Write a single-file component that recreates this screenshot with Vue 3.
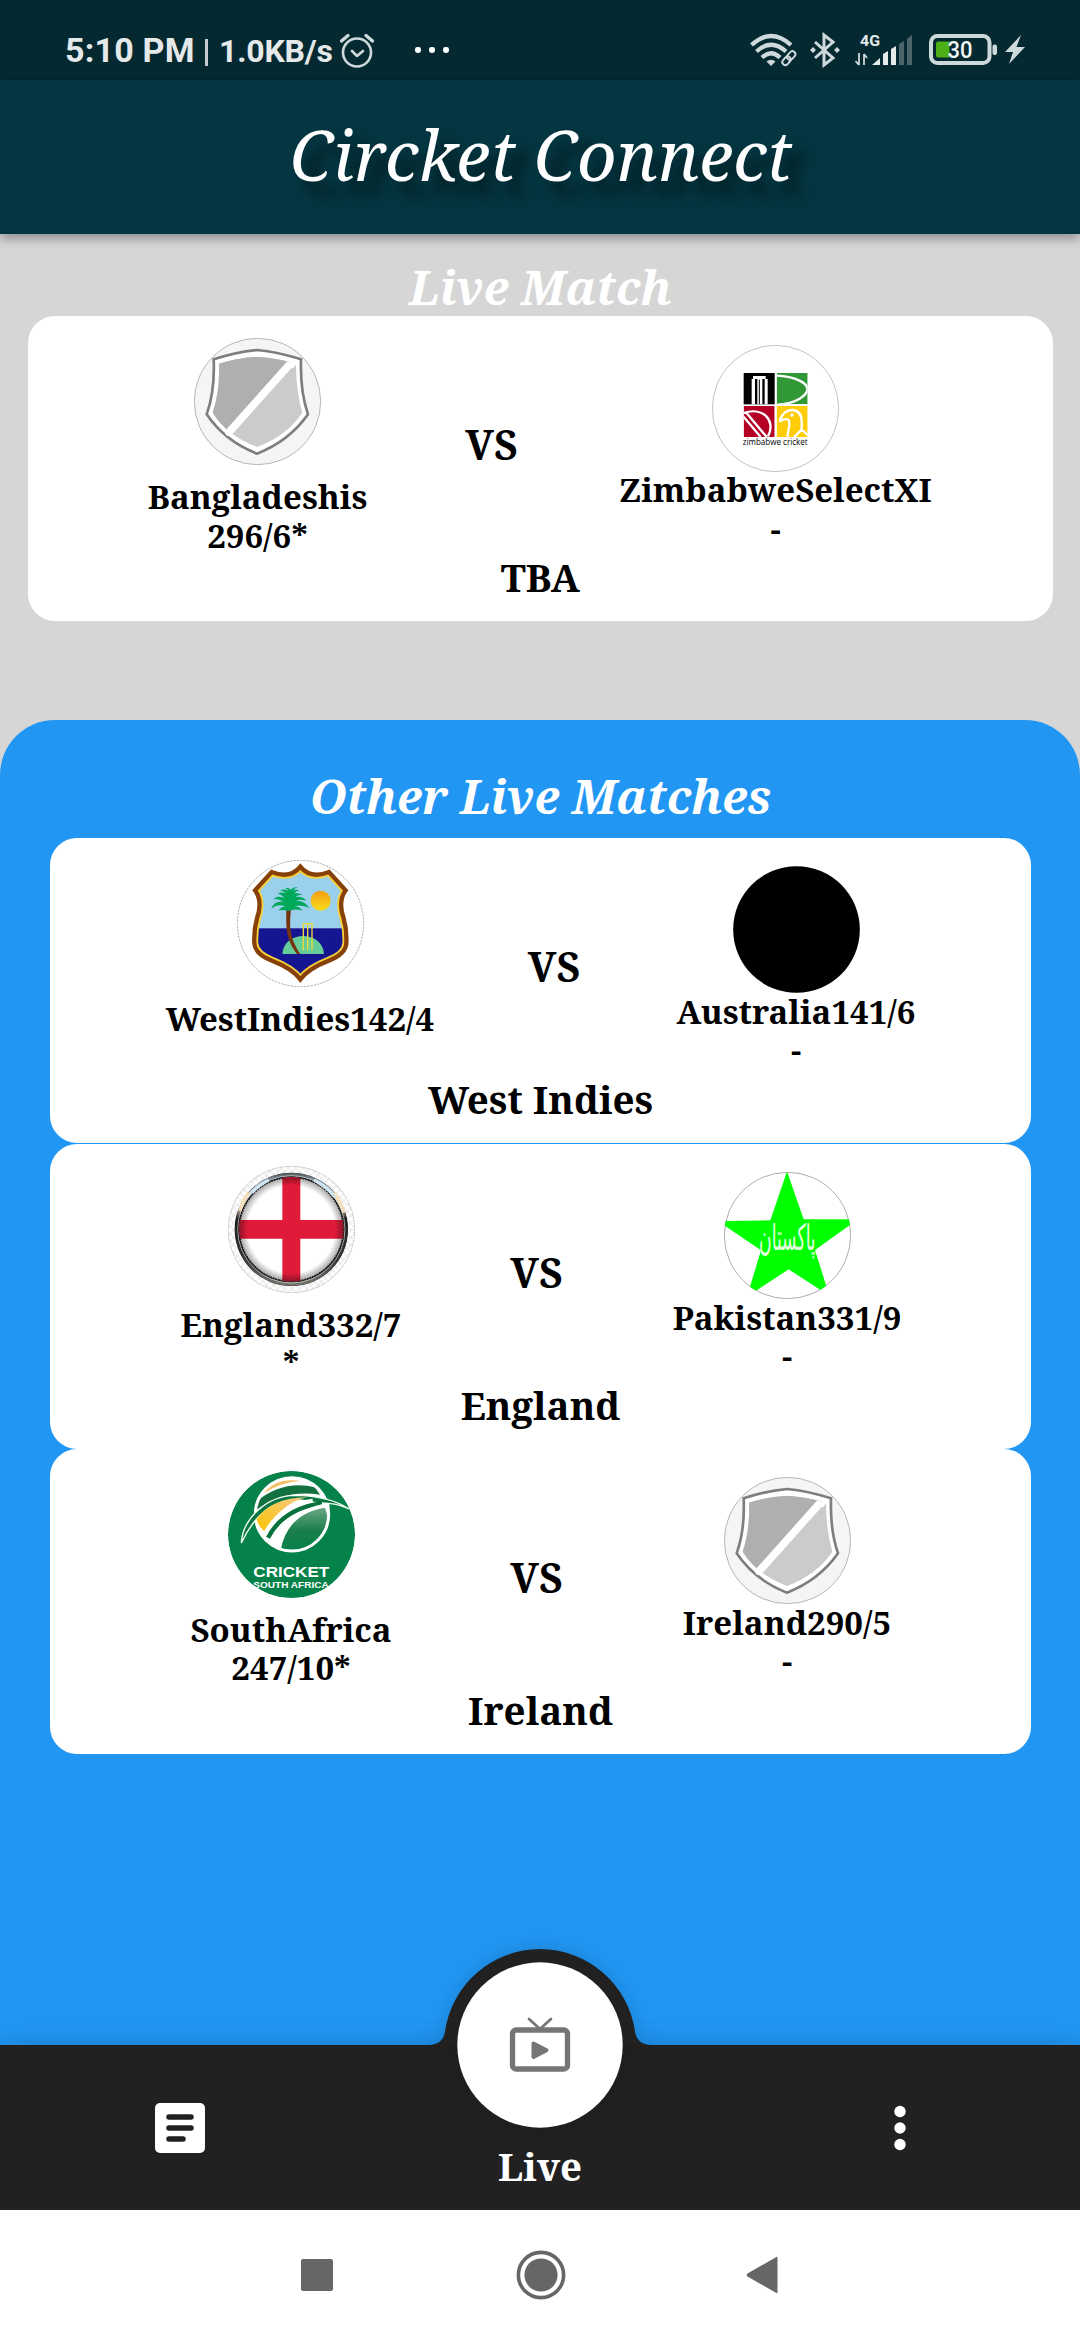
<script setup>
// Column centres are measured from the card's left edge
const SIDE = 360
const MIDDLE = 100

const columns = ([home, vs, away]) => {
  const left = home - SIDE / 2
  const gapA = vs - MIDDLE / 2 - (left + SIDE)
  const gapB = away - SIDE / 2 - (vs + MIDDLE / 2)
  return { gridTemplateColumns: `${left}px ${SIDE}px ${gapA}px ${MIDDLE}px ${gapB}px ${SIDE}px` }
}

const sections = [
  {
    kind: 'featured',
    title: 'Live Match',
    matches: [
      {
        home: { logo: 'shield', name: 'Bangladeshis', score: '296/6*' },
        away: { logo: 'zimbabwe', name: 'ZimbabweSelectXI', score: '-' },
        venue: 'TBA',
        centres: [230, 464, 748],
      },
    ],
  },
  {
    kind: 'others',
    title: 'Other Live Matches',
    matches: [
      {
        home: { logo: 'westindies', name: 'WestIndies142/4', score: '' },
        away: { logo: 'blank', name: 'Australia141/6', score: '-' },
        venue: 'West Indies',
        centres: [250, 504, 746],
      },
      {
        home: { logo: 'england', name: 'England332/7', score: '*' },
        away: { logo: 'pakistan', name: 'Pakistan331/9', score: '-' },
        venue: 'England',
        centres: [241, 486.5, 737],
      },
      {
        home: { logo: 'southafrica', name: 'SouthAfrica', score: '247/10*' },
        away: { logo: 'shield', name: 'Ireland290/5', score: '-' },
        venue: 'Ireland',
        centres: [241, 486.5, 737],
      },
    ],
  },
]
</script>

<template>
  <div class="screen">
    <svg class="sprites" width="0" height="0" aria-hidden="true">
      <defs>
        <clipPath id="round"><circle cx="190.5" cy="190.5" r="190.5" /></clipPath>
        <clipPath id="crest">
          <path d="M300 110Q330 148 386 126L436 181Q412 215 430 265Q440 300 438 340Q436 372 385 392Q325 415 300 448Q275 415 215 392Q164 372 162 340Q160 300 170 265Q188 215 164 181L214 126Q270 148 300 110Z" />
        </clipPath>
        <clipPath id="shield-in">
          <path d="M189 56Q252 60 306 77Q306 160 325 224Q280 292 189 327Q98 292 56 224Q78 160 75 77Q126 60 189 56Z" />
        </clipPath>
        <clipPath id="ball"><circle cx="276" cy="222" r="110" /></clipPath>
        <clipPath id="zred"><rect x="95" y="183" width="93" height="93" /></clipPath>
        <clipPath id="zgreen"><rect x="194" y="84" width="93" height="94" /></clipPath>
        <clipPath id="zgold"><rect x="194" y="183" width="93" height="93" /></clipPath>
        <linearGradient id="sun" x1="0" y1="0" x2="0" y2="1">
          <stop offset="0" stop-color="#f39c12" /><stop offset="1" stop-color="#f8dc1c" />
        </linearGradient>
        <linearGradient id="gold" x1="0" y1="1" x2="1" y2="0">
          <stop offset="0" stop-color="#fdc400" /><stop offset="1" stop-color="#f5c98a" />
        </linearGradient>
        <linearGradient id="chrome" x1="0" y1="0" x2="0" y2="1">
          <stop offset="0" stop-color="#5c6468" /><stop offset=".12" stop-color="#c5dbe6" />
          <stop offset=".3" stop-color="#e8dcc6" /><stop offset=".4" stop-color="#1c1c1c" />
          <stop offset=".8" stop-color="#3a3a3a" /><stop offset="1" stop-color="#77756e" />
        </linearGradient>
        <linearGradient id="glow" x1="0" y1="0" x2="0" y2="1">
          <stop offset="0" stop-color="#6aa883" /><stop offset=".55" stop-color="#1a7d4b" /><stop offset="1" stop-color="#058249" />
        </linearGradient>
        <radialGradient id="dish">
          <stop offset=".84" stop-color="#000" stop-opacity="0" /><stop offset="1" stop-color="#000" stop-opacity=".35" />
        </radialGradient>
        <pattern id="checks" width="22" height="22" patternUnits="userSpaceOnUse">
          <rect width="22" height="22" fill="#fff" /><path d="M0 0h11v11H0zM11 11h11v11H11z" fill="#eee" />
        </pattern>

        <symbol id="logo-shield" viewBox="0 0 381 381">
          <circle cx="190.5" cy="190.5" r="189.5" fill="#f5f5f5" stroke="#a8a8a8" stroke-width="2.500" />
          <path d="M189 36Q252 42 321 64Q318 160 342 229Q285 310 189 347Q93 310 38 229Q63 160 59 64Q126 42 189 36Z" fill="#fff" stroke="#7e7e7e" stroke-width="8" />
          <g clip-path="url(#shield-in)">
            <path d="M0 0H381V381H0Z" fill="#cbcbcb" />
            <path d="M0 0H357L17 381H0Z" fill="#afafaf" />
            <path d="M320 42L80 311" stroke="#fff" stroke-width="23" />
          </g>
          <path d="M310 66L292 88M96 290L114 276" stroke="#fff" stroke-width="12" />
        </symbol>

        <symbol id="logo-zimbabwe" viewBox="0 0 381 381">
          <circle cx="190.5" cy="190.5" r="189.5" fill="#fff" stroke="#b4b4b4" stroke-width="2.500" />
          <path d="M95 84h93v94H95z" fill="#000" />
          <path d="M123 93h38v9h6v76h-9v-76h-7v76h-15v-76h-7v76h-10v-76h4z" fill="#fff" />
          <path d="M142 104v74" stroke="#000" stroke-width="3" />
          <g clip-path="url(#zgreen)">
            <path d="M194 84h93v94h-93z" fill="#319838" />
            <path d="M190 92C255 94 286 116 286 132S260 176 190 180" fill="none" stroke="#fff" stroke-width="7" />
          </g>
          <g clip-path="url(#zred)">
            <path d="M95 183h93v93H95z" fill="#b30024" />
            <path d="M93 205C150 183 194 225 168 274M92 212L146 276M103 203L164 276" fill="none" stroke="#fff" stroke-width="7" />
          </g>
          <g clip-path="url(#zgold)">
            <path d="M194 183h93v93h-93z" fill="#ffcd08" />
            <path d="M203 230C207 207 224 194 242 195Q270 198 269 233V254L288 271M269 254L246 277M203 230C212 221 228 219 231 228C235 245 227 258 226 278" fill="none" stroke="#fff" stroke-width="7" stroke-linejoin="round" />
            <circle cx="240" cy="210" r="5" fill="#fff" />
          </g>
          <text x="92" y="299" font-family="'Open Sans', 'Noto Sans', sans-serif" font-size="25" textLength="195" lengthAdjust="spacingAndGlyphs">zimbabwe cricket</text>
        </symbol>

        <symbol id="logo-westindies" viewBox="0 0 381 381">
          <circle cx="190.5" cy="190.5" r="189.5" fill="#fff" stroke="#9a9a9a" stroke-width="2.500" stroke-dasharray="7 3" />
          <g transform="translate(-110 -90)">
            <g clip-path="url(#crest)">
              <path d="M150 100h300v195H150z" fill="#9bd0ec" />
              <path d="M150 295h300v165H150z" fill="#151592" />
              <circle cx="361" cy="212" r="30" fill="url(#sun)" />
              <path d="M246 372C250 300 367 300 371 372Z" fill="#66cc99" />
              <path d="M258 238H272C268 280 264 320 300 372H290C253 325 258 280 258 238Z" fill="#75340f" />
              <path d="M264 243Q244 238 234 242Q244 229 257 229Q230 220 213 236Q222 211 250 215Q229 203 219 209Q228 195 251 203Q242 191 232 192Q242 184 257 191Q250 182 239 181Q253 175 265 183Q259 175 254 174Q265 172 271 179Q279 170 292 171Q281 176 279 182Q289 177 298 181Q286 183 283 190Q297 188 306 194Q290 195 284 201Q307 198 319 212Q301 206 287 212Q312 211 327 234Q304 222 283 229Q298 230 306 242Q285 234 264 243Z" fill="#00a85a" />
              <path d="M309 361V281M322 361V281M335 361V281M307 281h31" fill="none" stroke="#eedb3a" stroke-width="4" />
              <path d="M300 110Q330 148 386 126L436 181Q412 215 430 265Q440 300 438 340Q436 372 385 392Q325 415 300 448Q275 415 215 392Q164 372 162 340Q160 300 170 265Q188 215 164 181L214 126Q270 148 300 110Z" fill="none" stroke="#f6cf3a" stroke-width="24" />
            </g>
            <path d="M300 110Q330 148 386 126L436 181Q412 215 430 265Q440 300 438 340Q436 372 385 392Q325 415 300 448Q275 415 215 392Q164 372 162 340Q160 300 170 265Q188 215 164 181L214 126Q270 148 300 110Z" fill="none" stroke="#874008" stroke-width="13" />
          </g>
        </symbol>

        <symbol id="logo-blank" viewBox="0 0 381 381"><circle cx="190.5" cy="190.5" r="190" fill="#000" /></symbol>

        <symbol id="logo-england" viewBox="0 0 381 381">
          <circle cx="190.5" cy="190.5" r="189.5" fill="url(#checks)" stroke="#a8a8a8" stroke-width="2.500" stroke-dasharray="5 3" />
          <circle cx="190" cy="190" r="170" fill="#1f1f1f" />
          <circle cx="190" cy="190" r="164" fill="none" stroke="url(#chrome)" stroke-width="10" />
          <circle cx="190" cy="190" r="161" fill="none" stroke="#ddd" stroke-width="2" />
          <circle cx="190" cy="190" r="156" fill="#fff" stroke="#111" stroke-width="4" stroke-dasharray="5 3" />
          <path d="M163 36Q190 30 217 36V162H344Q348 190 344 218H217V344Q190 348 163 344V218H36Q32 190 36 162H163Z" fill="#e01b39" />
          <circle cx="190" cy="190" r="156" fill="url(#dish)" />
          <path d="M62 80Q42 104 36 134" fill="none" stroke="#f4dfb8" stroke-width="10" />
          <path d="M318 80Q340 108 348 140" fill="none" stroke="#f4dfb8" stroke-width="10" />
          <path d="M258 42Q296 62 320 92M122 42Q88 60 72 80" fill="none" stroke="#cfe5f1" stroke-width="10" />
        </symbol>

        <symbol id="logo-pakistan" viewBox="0 0 381 381">
          <circle cx="190.5" cy="190.5" r="189.5" fill="#fff" stroke="#9e9e9e" stroke-width="2.500" />
          <g clip-path="url(#round)">
            <path transform="translate(-221 -68)" d="M410 66L460 210L622 210L494 302L537 439L415 360L290 442L332 303L202 215L360 213Z" fill="#00ff00" />
            <text x="190" y="234" text-anchor="middle" fill="#e6ffe0" font-family="'DejaVu Sans', sans-serif" font-size="108" textLength="170" lengthAdjust="spacingAndGlyphs">پاکستان</text>
          </g>
        </symbol>

        <symbol id="logo-southafrica" viewBox="0 0 381 381">
          <g clip-path="url(#round)">
            <circle cx="190.5" cy="190.5" r="190.5" fill="#058249" />
            <g transform="translate(-84 -92)">
              <g clip-path="url(#ball)">
                <circle cx="276" cy="222" r="110" fill="#fff" />
                <path d="M190 160Q225 112 300 121Q240 126 190 160Z" fill="#f6bd62" />
                <path d="M150 200Q240 115 345 141L360 163Q240 145 150 225Z" fill="#12713f" />
                <path d="M242 330Q262 220 375 202L395 270L340 330Z" fill="url(#glow)" />
              </g>
              <circle cx="276" cy="222" r="110" fill="none" stroke="#fff" stroke-width="9" />
              <path d="M124 308C128 235 200 166 285 165Q390 167 447 206Q405 185 350 188Q200 145 124 308Z" fill="#0a7743" stroke="#f3fff3" stroke-width="4" />
              <path d="M170 236Q215 173 320 171Q240 190 196 276Q174 258 170 236Z" fill="url(#gold)" />
              <path d="M204 292Q250 204 366 189" fill="none" stroke="#08713e" stroke-width="13" />
              <path d="M194 280Q240 192 338 180M228 314Q265 210 388 193" fill="none" stroke="#fff" stroke-width="10" />
              <text x="160" y="411" fill="#fff" font-family="'Liberation Sans', sans-serif" font-weight="700" font-size="43" textLength="228" lengthAdjust="spacingAndGlyphs">CRICKET</text>
              <text x="160" y="443" fill="#fff" font-family="'Liberation Sans', sans-serif" font-weight="700" font-size="26" textLength="226" lengthAdjust="spacingAndGlyphs">SOUTH AFRICA</text>
            </g>
          </g>
        </symbol>
      </defs>
    </svg>

    <div class="status">
      <span class="clock">5:10 PM</span>
      <span class="bar"></span>
      <span class="speed">1.0KB/s</span>
      <svg class="alarm" width="36" height="36" viewBox="0 0 36 36" fill="none" stroke="#ced9db" stroke-width="2.6" stroke-linecap="round" stroke-linejoin="round">
        <circle cx="18" cy="20.5" r="14" /><path d="M13 19l5 5 6-5" /><path d="M2.5 9L9 3.5M33.500 9L27 3.500" stroke-width="3.4" />
      </svg>
      <svg class="more" width="36" height="8" viewBox="0 0 36 8" fill="#fff">
        <rect x="1" y="1" width="6" height="6" rx="2.400" /><rect x="15" y="1" width="6" height="6" rx="2.400" /><rect x="29" y="1" width="6" height="6" rx="2.400" />
      </svg>
      <svg class="wifi" width="48" height="36" viewBox="0 0 48 36" fill="none" stroke="#ced9db" stroke-width="4.200">
        <path d="M1.500 13Q21 -5 41 13M6.500 19.500Q21 6 36 19.500M12 25.500Q21 17 30 25.500" />
        <path d="M21 34L16.500 29.500Q21 26 25.500 29.500Z" fill="#ced9db" stroke="none" />
        <g stroke-width="1.900" transform="rotate(-48 39 26)"><rect x="30.500" y="23" width="9.500" height="6" rx="3" /><rect x="37.500" y="23" width="9.500" height="6" rx="3" /></g>
      </svg>
      <svg class="bluetooth" width="30" height="36" viewBox="0 0 30 36" fill="none" stroke="#ced9db" stroke-width="3">
        <path d="M5 10L23 26L14 33V3L23 10L5 26" /><path d="M3 15l3 3-3 3-3-3zM27 15l3 3-3 3-3-3z" fill="#ced9db" stroke="none" />
      </svg>
      <svg class="signal" width="58" height="36" viewBox="0 0 58 36" fill="#e5eaeb">
        <text x="5" y="14" font-family="Roboto, sans-serif" font-weight="700" font-size="15.500" textLength="20" lengthAdjust="spacingAndGlyphs">4G</text>
        <path d="M4 21v12M9 33V22M4 33l-3.500-4M9 22l3 4" fill="none" stroke="#ced9db" stroke-width="1.800" />
        <path d="M17 33l8-7v7zM28 33V22l5-3v14zM36 33V17l5-3v19z" />
        <path d="M44 33V12l5-3v24zM52 33V7l5-4v30z" fill="#4d666c" />
      </svg>
      <svg class="battery" width="70" height="32" viewBox="0 0 70 32">
        <rect x="2" y="2" width="58.500" height="27" rx="6.500" fill="none" stroke="#ced9db" stroke-width="4" />
        <path d="M9 7.500h11.500v16H9a2 2 0 0 1-2-2v-12a2 2 0 0 1 2-2z" fill="#4caf16" />
        <rect x="63.500" y="10.500" width="4.500" height="10.500" rx="2" fill="#ced9db" />
        <text x="18.500" y="24" fill="#f3f6f6" font-family="Roboto, sans-serif" font-weight="500" font-size="23" textLength="25" lengthAdjust="spacingAndGlyphs">30</text>
      </svg>
      <svg class="bolt" width="20" height="30" viewBox="0 0 20 30" fill="#ced9db"><path d="M16 0L0 17H8L4 29L20 12H11.500Z" /></svg>
    </div>

    <header class="header"><h1>Circket Connect</h1></header>

    <main class="content">
      <section v-for="s in sections" :key="s.kind" :class="s.kind">
        <h2>{{ s.title }}</h2>
        <article v-for="m in s.matches" :key="m.venue" class="card">
          <div class="teams" :style="columns(m.centres)">
            <div class="team home">
              <svg class="logo" width="127" height="127"><use :href="'#logo-' + m.home.logo" /></svg>
              <span>{{ m.home.name }}</span><span>{{ m.home.score }}</span>
            </div>
            <div class="vs">VS</div>
            <div class="team away">
              <svg class="logo" width="127" height="127"><use :href="'#logo-' + m.away.logo" /></svg>
              <span>{{ m.away.name }}</span><span>{{ m.away.score }}</span>
            </div>
          </div>
          <div class="venue">{{ m.venue }}</div>
        </article>
      </section>
    </main>

    <nav class="tabs">
      <div class="tab">
        <svg width="50" height="50" viewBox="0 0 50 50"><rect width="50" height="50" rx="5" fill="#fff" /><path d="M14 14h22M14 25h22M14 36h14" stroke="#212121" stroke-width="5.500" stroke-linecap="round" /></svg>
      </div>
      <div class="tab live">
        <svg class="bump" width="224" height="182" viewBox="0 0 224 182">
          <path d="M0 98V97H2Q15 96 16.900 84A96 96 0 0 1 207.100 84Q209 96 222 97H224V98Z" fill="#212121" />
          <circle cx="112" cy="97" r="82.700" fill="#fff" />
          <rect x="84.500" y="82" width="55" height="39" rx="3.500" fill="none" stroke="#757575" stroke-width="5.300" />
          <path d="M101 71L112 81L123 71" fill="none" stroke="#757575" stroke-width="2.700" stroke-linecap="round" />
          <path d="M105.500 95.500v13.500l13-6.800z" fill="#757575" stroke="#757575" stroke-width="4" stroke-linejoin="round" />
        </svg>
        <span>Live</span>
      </div>
      <div class="tab">
        <svg width="12" height="46" viewBox="0 0 12 46" fill="#fff"><circle cx="6" cy="6.500" r="5.700" /><circle cx="6" cy="23" r="5.700" /><circle cx="6" cy="39.500" r="5.700" /></svg>
      </div>
    </nav>

    <div class="system">
      <svg width="32" height="32" viewBox="0 0 32 32"><rect width="32" height="32" rx="2" fill="#666" /></svg>
      <svg width="50" height="50" viewBox="0 0 50 50"><circle cx="25" cy="25" r="22.600" fill="none" stroke="#666" stroke-width="3.600" /><circle cx="25" cy="25" r="16.600" fill="#666" /></svg>
      <svg width="32" height="38" viewBox="0 0 32 38"><path d="M29.500 1.500Q31.500 0 31.500 2V36Q31.500 38 29.500 36.500L1.500 20.500Q0 19 1.500 17.500Z" fill="#666" /></svg>
    </div>
  </div>
</template>

<style>
body { margin: 0; }
</style>

<style scoped>
.screen {
  width: 1080px;
  height: 2340px;
  display: flex;
  flex-direction: column;
  overflow: hidden;
  background: #d6d6d6;
  color: #000;
  font-family: "Noto Serif", "DejaVu Serif Condensed", "DejaVu Serif", serif;
}
.sprites { position: absolute; }
h1, h2 { margin: 0; color: #fff; font-style: italic; text-align: center; white-space: nowrap; }

.status {
  flex: none;
  height: 80px;
  box-sizing: border-box;
  padding: 20px 55px 0 65px;
  display: flex;
  align-items: center;
  background: #042931;
  color: #e5e9ea;
  font-family: Roboto, sans-serif;
  font-weight: 700;
  white-space: nowrap;
}
.status svg { flex: none; }
.clock { width: 129px; font-size: 34px; letter-spacing: 0.2px; }
.bar { width: 3px; height: 27px; margin: 5px 11px 0 11px; background: #c4ced0; }
.speed { width: 112px; font-size: 32px; letter-spacing: -0.2px; padding-top: 1px; }
.alarm { margin-left: 8px; }
.more { margin-left: 39px; margin-right: auto; }
.bluetooth { margin: 0 15px 0 12px; }
.signal { margin-right: 16px; }
.battery { margin-right: 6px; }

.header {
  position: relative;
  flex: none;
  height: 154px;
  display: flex;
  align-items: center;
  justify-content: center;
  background: #043641;
  box-shadow: 0 4px 11px rgba(0, 0, 0, 0.36);
}
h1 {
  font-size: 69px;
  font-weight: 400;
  line-height: 80px;
  padding-bottom: 7px;
  padding-left: 2px;
  text-shadow: 14px 14px 14px rgba(0, 0, 0, 0.6);
}

.content { flex: 1; display: flex; flex-direction: column; min-height: 0; }
h2 { height: 55px; line-height: 53px; font-size: 46.800px; font-weight: 700; }
.featured { padding: 27px 27px 98.5px 27.5px; }
.others { flex: 1; padding: 50px 49px 0 50px; border-radius: 55px 55px 0 0; background: #2196f3; }
.others h2 { margin-bottom: 13px; }

.card {
  height: 305px;
  border-radius: 27px;
  background: #fff;
  display: flex;
  flex-direction: column;
}
.others .card + .card { margin-top: 0; }
.others h2 + .card { margin-bottom: 1px; }
.teams { display: grid; height: 239px; }
.team { display: flex; flex-direction: column; align-items: center; font-size: 33px; font-weight: 700; line-height: 38.700px; white-space: nowrap; }
.home { grid-column: 2; padding-top: 22px; }
.away { grid-column: 6; padding-top: 28.500px; }
.logo { flex: none; display: block; font-weight: 400; }
.home .logo { margin-bottom: 13px; }
.away .logo { margin-bottom: -0.500px; }
.vs { grid-column: 4; padding-top: 103px; font-size: 41px; line-height: 50px; font-weight: 700; text-align: center; }
.venue { font-size: 38.500px; line-height: 44px; font-weight: 700; text-align: center; }

.tabs {
  position: relative;
  flex: none;
  height: 165px;
  display: grid;
  grid-template-columns: repeat(3, 1fr);
  background: #212121;
  box-shadow: 0 0 26px rgba(0, 0, 0, 0.18);
}
.tab { display: flex; align-items: center; justify-content: center; }
.tab.live { position: relative; align-items: flex-end; color: #fff; font-size: 38.500px; font-weight: 700; line-height: 50px; padding-bottom: 19px; }
.bump { position: absolute; left: 68px; top: -97px; filter: drop-shadow(0 0 10px rgba(0, 0, 0, 0.14)); }

.system {
  position: relative;
  flex: none;
  height: 130px;
  background: #fff;
  display: flex;
  align-items: center;
  justify-content: center;
}
.system svg:nth-child(1) { margin-left: -2px; margin-right: 183.500px; }
.system svg:nth-child(2) { margin-right: 179.500px; }
</style>
